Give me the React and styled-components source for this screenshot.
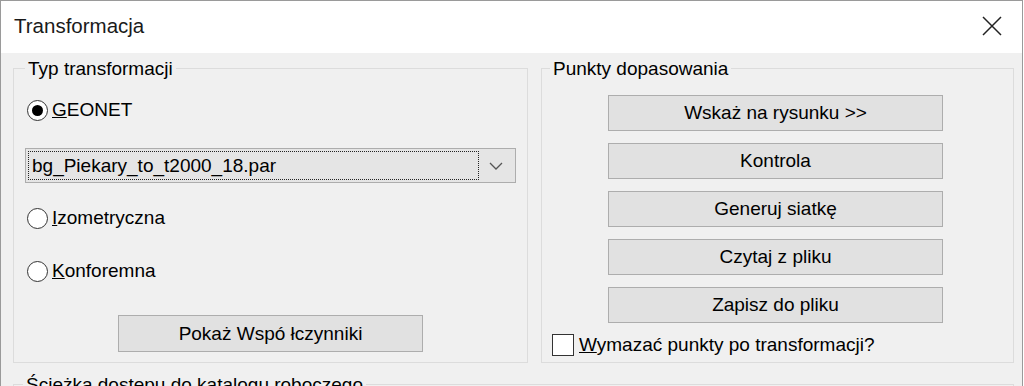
import React from 'react'
import styled, { createGlobalStyle } from 'styled-components'

const GlobalStyle = createGlobalStyle`
  html, body {
    margin: 0;
    padding: 0;
    background: #ffffff;
  }
  body {
    font-family: "Liberation Sans", Arial, sans-serif;
  }
`

const Window = styled.div`
  width: 1023px;
  height: 386px;
  box-sizing: border-box;
  border: 1px solid #9a9a9a;
  border-bottom: none;
  overflow: hidden;
  background: #f0f0f0;
  display: flex;
  flex-direction: column;
`

const TitleBar = styled.div`
  height: 52px;
  flex: none;
  background: #ffffff;
  display: flex;
  align-items: center;
  justify-content: space-between;
  padding-left: 13px;
  padding-right: 20px;
`

const Title = styled.div`
  font-family: "Liberation Sans", Arial, sans-serif;
  font-size: 20.5px;
  color: #1a1a1a;
  padding-bottom: 2px;
`

const CloseButton = styled.div`
  width: 20px;
  height: 20px;
  display: flex;
  align-items: center;
  justify-content: center;
  margin-bottom: 2px;
`

const Body = styled.div`
  padding: 15px 8px 0 12px;
  display: flex;
  flex-direction: column;
`

const Columns = styled.div`
  display: grid;
  grid-template-columns: 515px 473px;
  column-gap: 13px;
  height: 295px;
`

const Group = styled.div`
  border: 1px solid #dcdcdc;
  display: flex;
  flex-direction: column;
  align-items: flex-start;
  box-sizing: border-box;
  min-width: 0;
`

const Caption = styled.div`
  margin-top: -11px;
  margin-left: ${(p) => p.$inset}px;
  padding: 0 3px;
  background: #f0f0f0;
  font-size: 19px;
  line-height: 22px;
  color: #000;
  white-space: nowrap;
`

const OptionRow = styled.div`
  display: flex;
  align-items: center;
  height: 24px;
  margin-top: ${(p) => p.$top}px;
  margin-left: 13px;
  font-size: 19px;
  color: #000;
  gap: 4px;
`

const RadioCircle = styled.span`
  width: 21px;
  height: 21px;
  box-sizing: border-box;
  border-radius: 50%;
  border: 1.6px solid #333333;
  background: #ffffff;
  display: flex;
  align-items: center;
  justify-content: center;
  &::after {
    content: '';
    width: 11px;
    height: 11px;
    border-radius: 50%;
    background: ${(p) => (p.$checked ? '#000000' : 'transparent')};
  }
`

const Combo = styled.div`
  margin-top: 26px;
  margin-left: 11px;
  width: 491px;
  height: 35px;
  box-sizing: border-box;
  border: 1px solid #adadad;
  background: #e5e5e5;
  display: flex;
  align-items: center;
  padding: 2px;
`

const ComboValue = styled.div`
  flex: 1;
  height: 100%;
  box-sizing: border-box;
  border: 1px dotted #222;
  display: flex;
  align-items: center;
  padding-left: 3px;
  font-size: 19px;
  color: #000;
`

const ComboArrow = styled.div`
  width: 34px;
  display: flex;
  align-items: center;
  justify-content: center;
`

const PushButton = styled.div`
  margin-top: ${(p) => p.$top}px;
  margin-left: ${(p) => p.$left}px;
  width: ${(p) => p.$width}px;
  height: ${(p) => p.$height}px;
  box-sizing: border-box;
  border: 1px solid #adadad;
  background: #e1e1e1;
  display: flex;
  align-items: center;
  justify-content: center;
  font-size: 19px;
  color: #000;
  flex: none;
`

const CheckRow = styled.div`
  display: flex;
  align-items: center;
  margin-top: 11px;
  margin-left: 10px;
  font-size: 19px;
  color: #000;
  gap: 5px;
`

const CheckBox = styled.span`
  width: 22px;
  height: 22px;
  box-sizing: border-box;
  border: 1.5px solid #333333;
  background: #ffffff;
`

const PathGroup = styled(Group)`
  margin-top: 21px;
  height: 60px;
`

const Radio = ({ checked, accel, rest, top }) => (
  <OptionRow $top={top}>
    <RadioCircle $checked={checked} />
    <span>
      <u>{accel}</u>
      {rest}
    </span>
  </OptionRow>
)

const rightButtons = [
  'Wskaż na rysunku >>',
  'Kontrola',
  'Generuj siatkę',
  'Czytaj z pliku',
  'Zapisz do pliku',
]

export default function App() {
  return (
    <>
      <GlobalStyle />
      <Window>
        <TitleBar>
          <Title>Transformacja</Title>
          <CloseButton>
            <svg width="20" height="20" viewBox="0 0 20 20">
              <path d="M1 1 L19 19 M19 1 L1 19" stroke="#222" strokeWidth="1.5" fill="none" />
            </svg>
          </CloseButton>
        </TitleBar>
        <Body>
          <Columns>
            <Group>
              <Caption $inset={11}>Typ transformacji</Caption>
              <Radio checked accel="G" rest="EONET" top={18} />
              <Combo>
                <ComboValue>bg_Piekary_to_t2000_18.par</ComboValue>
                <ComboArrow>
                  <svg width="14" height="8" viewBox="0 0 14 8">
                    <path d="M1 1 L7 7 L13 1" stroke="#555" strokeWidth="1.3" fill="none" />
                  </svg>
                </ComboArrow>
              </Combo>
              <Radio accel="I" rest="zometryczna" top={23} />
              <Radio accel="K" rest="onforemna" top={29} />
              <PushButton $top={32} $left={104} $width={305} $height={37}>
                Pokaż Wspó łczynniki
              </PushButton>
            </Group>
            <Group>
              <Caption $inset={8}>Punkty dopasowania</Caption>
              {rightButtons.map((label, i) => (
                <PushButton key={label} $top={i === 0 ? 15 : 12} $left={66} $width={335} $height={36}>
                  {label}
                </PushButton>
              ))}
              <CheckRow>
                <CheckBox />
                <span>
                  <u>W</u>ymazać punkty po transformacji?
                </span>
              </CheckRow>
            </Group>
          </Columns>
          <PathGroup>
            <Caption $inset={9}>Ścieżka dostępu do katalogu roboczego</Caption>
          </PathGroup>
        </Body>
      </Window>
    </>
  )
}
